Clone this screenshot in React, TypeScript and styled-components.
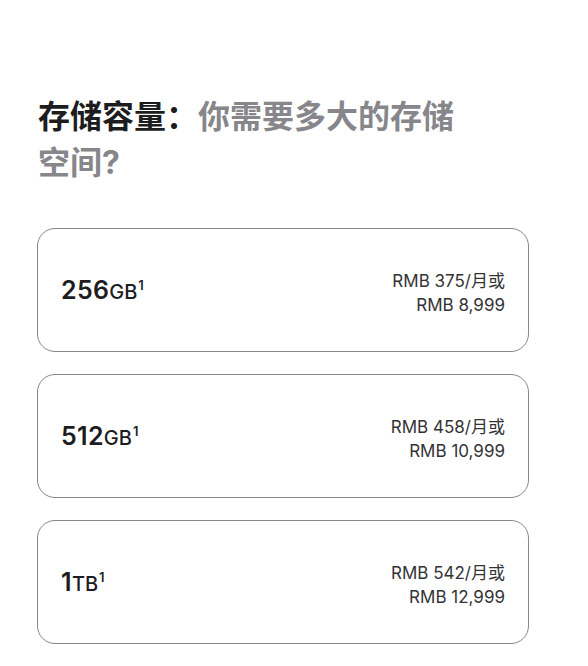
import styled, { createGlobalStyle } from 'styled-components';

const GlobalStyle = createGlobalStyle`
  body {
    margin: 0;
    background: #fff;
    font-family: Inter, "Noto Sans CJK SC", sans-serif;
    color: #1d1d1f;
  }
`;

const Page = styled.div`
  padding: 94px 59px 0 37px;
`;

const Heading = styled.h2`
  margin: 0 0 42px 1px;
  max-width: 430px;
  font-size: 32px;
  line-height: 46px;
  font-weight: 700;
  color: #1d1d1f;
`;

const Muted = styled.span`
  color: #86868b;
`;

const List = styled.div`
  display: flex;
  flex-direction: column;
  gap: 22px;
`;

const Option = styled.div`
  box-sizing: border-box;
  height: 124px;
  display: flex;
  align-items: center;
  justify-content: space-between;
  padding: 0 23px 0 23px;
  border: 1px solid #86868b;
  border-radius: 18px;
`;

const Capacity = styled.div`
  font-size: 25px;
  font-weight: 600;
  letter-spacing: 0.3px;
`;

const Unit = styled.span`
  font-size: 20px;
  font-weight: 500;
  letter-spacing: 0;
`;

const Note = styled.sup`
  font-size: 13px;
  font-weight: 600;
  vertical-align: 9px;
  line-height: 0;
  margin-left: 1px;
`;

const Price = styled.div`
  text-align: right;
  font-size: 17px;
  line-height: 24px;
  color: #333336;
  margin-top: 6px;
`;

const options = [
  { size: '256', unit: 'GB', monthly: '375', total: '8,999' },
  { size: '512', unit: 'GB', monthly: '458', total: '10,999' },
  { size: '1', unit: 'TB', monthly: '542', total: '12,999' },
];

function App() {
  return (
    <Page>
      <GlobalStyle />
      <Heading>
        存储容量：<Muted>你需要多大的存储空间?</Muted>
      </Heading>
      <List>
        {options.map((o) => (
          <Option key={o.size + o.unit}>
            <Capacity>
              {o.size}
              <Unit>{o.unit}</Unit>
              <Note>1</Note>
            </Capacity>
            <Price>
              RMB {o.monthly}/月或
              <br />
              RMB {o.total}
            </Price>
          </Option>
        ))}
      </List>
    </Page>
  );
}

export default App;
